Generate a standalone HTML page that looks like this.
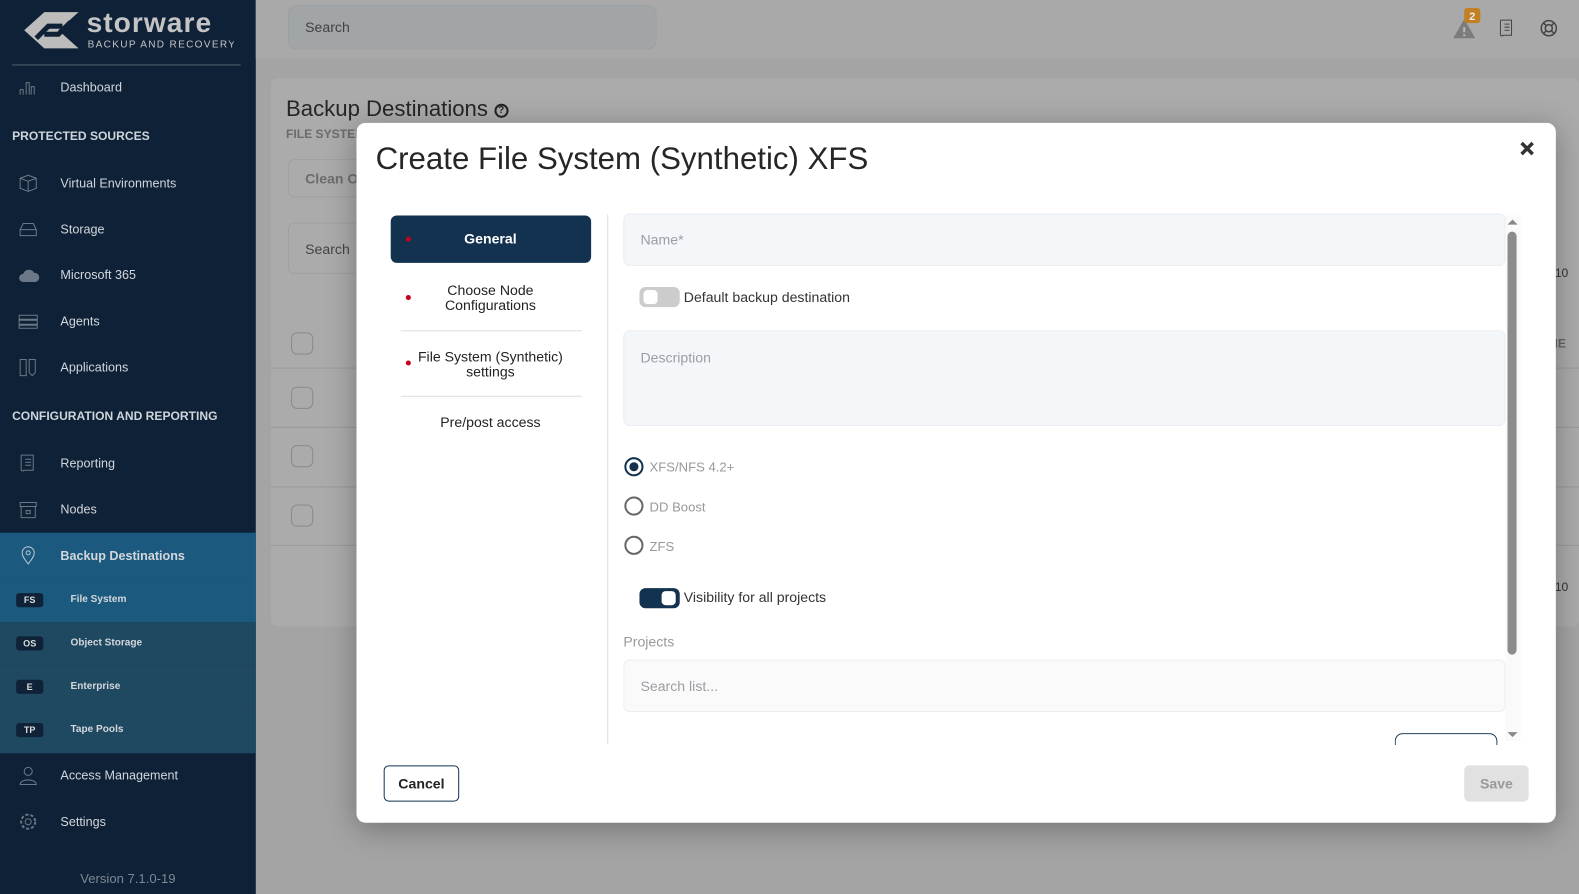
<!DOCTYPE html>
<html><head><meta charset="utf-8"><style>
*{box-sizing:border-box;margin:0;padding:0}
html,body{width:1579px;height:888px;overflow:hidden;background:#a4a4a4}
#w{position:absolute;left:0;top:0;width:1568px;height:882px;transform:scale(1.00702);transform-origin:0 0;font-family:"Liberation Sans",sans-serif}
.sb{position:absolute;left:0;top:0;width:254px;height:888px;background:#0e2137;color:#d3d7dc}
.logo{position:absolute;left:22px;top:8px}
.hr{position:absolute;left:12px;top:64px;width:227px;height:1px;background:#55606c}
.it{position:absolute;left:0;width:254px;height:46px;display:flex;align-items:center;font-size:12.5px}
.it svg{position:absolute;left:18px}
.it span{position:absolute;left:60px}
.sec{position:absolute;left:12px;font-size:12px;font-weight:bold;color:#cfd4da}
.sub{position:absolute;left:0;width:254px;height:43px;font-size:10px;font-weight:bold}
.tag{position:absolute;left:16px;top:14px;width:27px;height:14px;background:#0f2238;border-radius:3px;font-size:9px;color:#ddd;text-align:center;line-height:14px}
.sub span{position:absolute;left:70px;top:15px}
.top{position:absolute;left:254px;top:0;width:1325px;height:58px;background:#a9a9a9}
.srch{position:absolute;left:286px;top:5px;width:366px;height:44px;background:#a1a5a7;border:1px solid #9da0a2;border-radius:8px;color:#3f4245;font-size:14px;padding:13px 16px}
.card{position:absolute;left:269px;top:78px;width:1299px;height:544px;background:#ababab;border-radius:6px}
.modal{position:absolute;left:354px;top:122px;width:1191px;height:695px;background:#fff;border-radius:9px;box-shadow:0 6px 30px rgba(0,0,0,.3)}
.inp{position:absolute;background:#f4f7fa;border:1px solid #e9edf1;border-radius:6px;color:#9a9ea3;font-size:14px;padding:0 16px}
.tog{position:absolute;width:40px;height:20px;border-radius:6px}
.tog i{position:absolute;top:3px;width:14px;height:14px;border-radius:4px;background:#fff}
.rad{position:absolute;left:266px;width:19px;height:19px;border:2px solid #666;border-radius:50%}
.rl{position:absolute;left:291px;font-size:13px;color:#999}
.step{position:absolute;left:34px;width:198px;text-align:center;font-size:14px;color:#222;line-height:15px}
.dot{position:absolute;left:14px;width:5px;height:5px;border-radius:50%;background:#c8001e}
</style></head><body><div id="w">
<div class="sb">
 <svg class="logo" width="210" height="44" viewBox="0 0 210 44">
  <polygon points="2,22 22,4 56,4 36,22 56,40 22,40" fill="#bcbcbc"/>
  <path d="M14,30 L26,18 L40,18 M22,26 L36,26 L48,14" stroke="#0e2137" stroke-width="5" fill="none"/>
  <text x="64" y="24" font-size="28" font-weight="bold" fill="#c4c4c4" font-family="Liberation Sans" letter-spacing="1">storware</text>
  <text x="65" y="39" font-size="10" fill="#c4c4c4" font-family="Liberation Sans" letter-spacing="1.3">BACKUP AND RECOVERY</text>
 </svg>
 <div class="hr"></div>
 <div class="it" style="top:64px"><svg width="20" height="16"><path d="M2,15V10h3v5M8,15V3h3v12M13,15V7h3v8" stroke="#6c7885" fill="none"/></svg><span>Dashboard</span></div>
 <div class="sec" style="top:128px">PROTECTED SOURCES</div>
 <div class="it" style="top:159px"><svg width="20" height="20"><path d="M2,5L10,2L18,5V15L10,18L2,15Z M2,5L10,8L18,5M10,8V18" stroke="#6c7885" fill="none"/></svg><span>Virtual Environments</span></div>
 <div class="it" style="top:205px"><svg width="20" height="16"><path d="M2,8L5,2H15L18,8V14H2Z M2,8H18" stroke="#6c7885" fill="none"/></svg><span>Storage</span></div>
 <div class="it" style="top:250px"><svg width="22" height="16"><path d="M5,15A4,4 0 0 1 5,7A6,6 0 0 1 16,6A4.5,4.5 0 0 1 17,15Z" fill="#6c7885"/></svg><span>Microsoft 365</span></div>
 <div class="it" style="top:296px"><svg width="20" height="16"><path d="M1,2H19V6H1ZM1,7H19V11H1ZM1,12H19V15H1Z" stroke="#6c7885" fill="none"/></svg><span>Agents</span></div>
 <div class="it" style="top:342px"><svg width="20" height="20"><path d="M2,2H8V18H2ZM11,2H17V15L14,18L11,15Z" stroke="#6c7885" fill="none"/></svg><span>Applications</span></div>
 <div class="sec" style="top:406px">CONFIGURATION AND REPORTING</div>
 <div class="it" style="top:437px"><svg width="20" height="20"><path d="M3,2H15V17H5M6,17A2,2 0 0 1 3,17V2M7,6H13M7,9H13M7,12H13" stroke="#6c7885" fill="none"/></svg><span>Reporting</span></div>
 <div class="it" style="top:483px"><svg width="20" height="18"><path d="M2,2H18V6H2ZM3,6V17H17V6M8,10H12V13H8Z" stroke="#6c7885" fill="none"/></svg><span>Nodes</span></div>
 <div class="it" style="top:529px;background:#1b5a7e;font-weight:bold"><svg width="20" height="20"><path d="M10,18C6,13 4,10 4,7A6,6 0 0 1 16,7C16,10 14,13 10,18ZM10,5A2,2 0 1 1 10,9A2,2 0 1 1 10,5" stroke="#b9c5cf" fill="none"/></svg><span>Backup Destinations</span></div>
 <div class="sub" style="top:575px;background:#1b5a7e"><div class="tag">FS</div><span>File System</span></div>
 <div class="sub" style="top:618px;background:#1f4961"><div class="tag">OS</div><span>Object Storage</span></div>
 <div class="sub" style="top:661px;background:#1f4961"><div class="tag">E</div><span>Enterprise</span></div>
 <div class="sub" style="top:704px;background:#1f4961;height:44px"><div class="tag">TP</div><span>Tape Pools</span></div>
 <div class="it" style="top:747px"><svg width="20" height="20"><circle cx="10" cy="6" r="4" stroke="#6c7885" fill="none"/><path d="M2,19C2,13 18,13 18,19Z" stroke="#6c7885" fill="none"/></svg><span>Access Management</span></div>
 <div class="it" style="top:793px"><svg width="20" height="20"><circle cx="10" cy="10" r="3" stroke="#6c7885" fill="none"/><circle cx="10" cy="10" r="7" stroke="#6c7885" stroke-dasharray="3 2" stroke-width="2" fill="none"/></svg><span>Settings</span></div>
 <div style="position:absolute;left:0;width:254px;top:865px;text-align:center;font-size:13px;color:#7d8894">Version 7.1.0-19</div>
</div>
<div class="top"></div>
<div class="srch">Search</div>
<svg style="position:absolute;left:1442px;top:7px" width="30" height="32"><path d="M1,31L12,12L23,31Z" fill="#7c7c7c"/><rect x="11" y="20" width="2" height="5" fill="#bbb"/><rect x="11" y="27" width="2" height="2" fill="#bbb"/><rect x="12" y="1" width="16" height="15" rx="3" fill="#c27f24"/><text x="20" y="13" font-size="11" font-weight="bold" fill="#eee" text-anchor="middle" font-family="Liberation Sans">2</text></svg>
<svg style="position:absolute;left:1487px;top:19px" width="18" height="18"><path d="M3,1H14V16H5M6,16A2,2 0 0 1 3,16V1M7,5H12M7,8H12M7,11H12" stroke="#444" fill="none"/></svg>
<svg style="position:absolute;left:1529px;top:19px" width="18" height="18"><circle cx="9" cy="9" r="7.5" stroke="#444" fill="none" stroke-width="1.5"/><circle cx="9" cy="9" r="3.5" stroke="#444" fill="none" stroke-width="1.5"/><path d="M4,4L6.5,6.5M14,4L11.5,6.5M4,14L6.5,11.5M14,14L11.5,11.5" stroke="#444" stroke-width="1.5"/></svg>
<div class="card">
 <div style="position:absolute;left:15px;top:17px;font-size:22px;color:#262626">Backup Destinations <span style="border:2px solid #222;border-radius:50%;display:inline-block;width:14px;height:14px;line-height:10px;text-align:center;font-size:10px;font-weight:bold;vertical-align:3px">?</span></div>
 <div style="position:absolute;left:15px;top:48px;font-size:12px;font-weight:bold;color:#6b6b6b">FILE SYSTEM</div>
 <div style="position:absolute;left:17px;top:80px;width:120px;height:38px;border:1px solid #a0a0a0;border-radius:6px;color:#6d6d6d;font-size:14px;font-weight:bold;padding:10px 16px">Clean Old</div>
 <div style="position:absolute;left:17px;top:143px;width:120px;height:51px;border:1px solid #a0a0a0;border-radius:6px;color:#444;font-size:14px;padding:17px 16px">Search</div>
 <div style="position:absolute;left:1275px;top:186px;font-size:12px;color:#333">10</div>
 <div style="position:absolute;left:1268px;top:256px;font-size:12px;font-weight:bold;color:#666">ME</div>
 <div style="position:absolute;left:1275px;top:498px;font-size:12px;color:#333">10</div>
 <div style="position:absolute;left:0;top:287px;width:1299px;border-top:1px solid #9a9a9a"></div>
 <div style="position:absolute;left:0;top:346px;width:1299px;border-top:1px solid #9a9a9a"></div>
 <div style="position:absolute;left:0;top:405px;width:1299px;border-top:1px solid #9a9a9a"></div>
 <div style="position:absolute;left:0;top:463px;width:1299px;border-top:1px solid #9a9a9a"></div>
 <div style="position:absolute;left:20px;top:252px;width:22px;height:22px;border:1px solid #8a8a8a;border-radius:6px"></div>
 <div style="position:absolute;left:20px;top:306px;width:22px;height:22px;border:1px solid #8a8a8a;border-radius:6px"></div>
 <div style="position:absolute;left:20px;top:364px;width:22px;height:22px;border:1px solid #8a8a8a;border-radius:6px"></div>
 <div style="position:absolute;left:20px;top:423px;width:22px;height:22px;border:1px solid #8a8a8a;border-radius:6px"></div>
</div>
<div class="modal">
 <div style="position:absolute;left:19px;top:18px;font-size:31px;color:#262626">Create File System (Synthetic) XFS</div>
 <svg style="position:absolute;left:1155px;top:18px" width="15" height="15"><path d="M2,2L13,13M13,2L2,13" stroke="#333" stroke-width="3.5"/></svg>
 <div style="position:absolute;left:34px;top:92px;width:199px;height:47px;background:#123250;border-radius:6px"></div>
 <div class="dot" style="left:49px;top:113px"></div>
 <div class="step" style="top:108px;color:#fff;font-weight:bold">General</div>
 <div class="dot" style="left:49px;top:171px"></div>
 <div class="step" style="top:159px">Choose Node<br>Configurations</div>
 <div style="position:absolute;left:44px;top:206px;width:180px;border-top:1px solid #ddd"></div>
 <div class="dot" style="left:49px;top:236px"></div>
 <div class="step" style="top:225px">File System (Synthetic)<br>settings</div>
 <div style="position:absolute;left:44px;top:271px;width:180px;border-top:1px solid #ddd"></div>
 <div class="step" style="top:290px">Pre/post access</div>
 <div style="position:absolute;left:249px;top:91px;height:526px;border-left:1px solid #ddd"></div>
 <div class="inp" style="left:265px;top:90px;width:876px;height:52px;line-height:50px">Name*</div>
 <div class="tog" style="left:281px;top:163px;background:#ccc"><i style="left:4px"></i></div>
 <div style="position:absolute;left:325px;top:165px;font-size:14px;color:#333">Default backup destination</div>
 <div class="inp" style="left:265px;top:206px;width:876px;height:95px;padding-top:18px">Description</div>
 <div class="rad" style="top:332px;border-color:#123250"><div style="position:absolute;left:3px;top:3px;width:9px;height:9px;border-radius:50%;background:#123250"></div></div>
 <div class="rl" style="top:334px">XFS/NFS 4.2+</div>
 <div class="rad" style="top:371px"></div><div class="rl" style="top:374px">DD Boost</div>
 <div class="rad" style="top:410px"></div><div class="rl" style="top:413px">ZFS</div>
 <div class="tog" style="left:281px;top:462px;background:#123250"><i style="left:22px"></i></div>
 <div style="position:absolute;left:325px;top:463px;font-size:14px;color:#333">Visibility for all projects</div>
 <div style="position:absolute;left:265px;top:507px;font-size:14px;color:#999">Projects</div>
 <div class="inp" style="left:265px;top:533px;width:876px;height:52px;line-height:50px;background:#fafafa;border-color:#eee">Search list...</div>
 <div style="position:absolute;left:1031px;top:606px;width:102px;height:12px;border:1px solid #123250;border-bottom:none;border-radius:8px 8px 0 0"></div>
 <div style="position:absolute;left:1141px;top:92px;width:15px;height:522px;background:#fafafa"></div>
 <div style="position:absolute;left:1143px;top:96px;width:0;height:0;border:5px solid transparent;border-bottom-color:#888;border-top:none"></div>
 <div style="position:absolute;left:1143px;top:108px;width:9px;height:420px;background:#8c8c8c;border-radius:5px"></div>
 <div style="position:absolute;left:1143px;top:605px;width:0;height:0;border:5px solid transparent;border-top-color:#888;border-bottom:none"></div>
 <div style="position:absolute;left:27px;top:638px;width:75px;height:36px;border:1px solid #123250;border-radius:5px;font-size:14px;font-weight:bold;color:#222;text-align:center;line-height:34px">Cancel</div>
 <div style="position:absolute;left:1100px;top:638px;width:64px;height:36px;background:#e1e1e1;border-radius:5px;font-size:14px;font-weight:bold;color:#999;text-align:center;line-height:36px">Save</div>
</div>
</div></body></html>
